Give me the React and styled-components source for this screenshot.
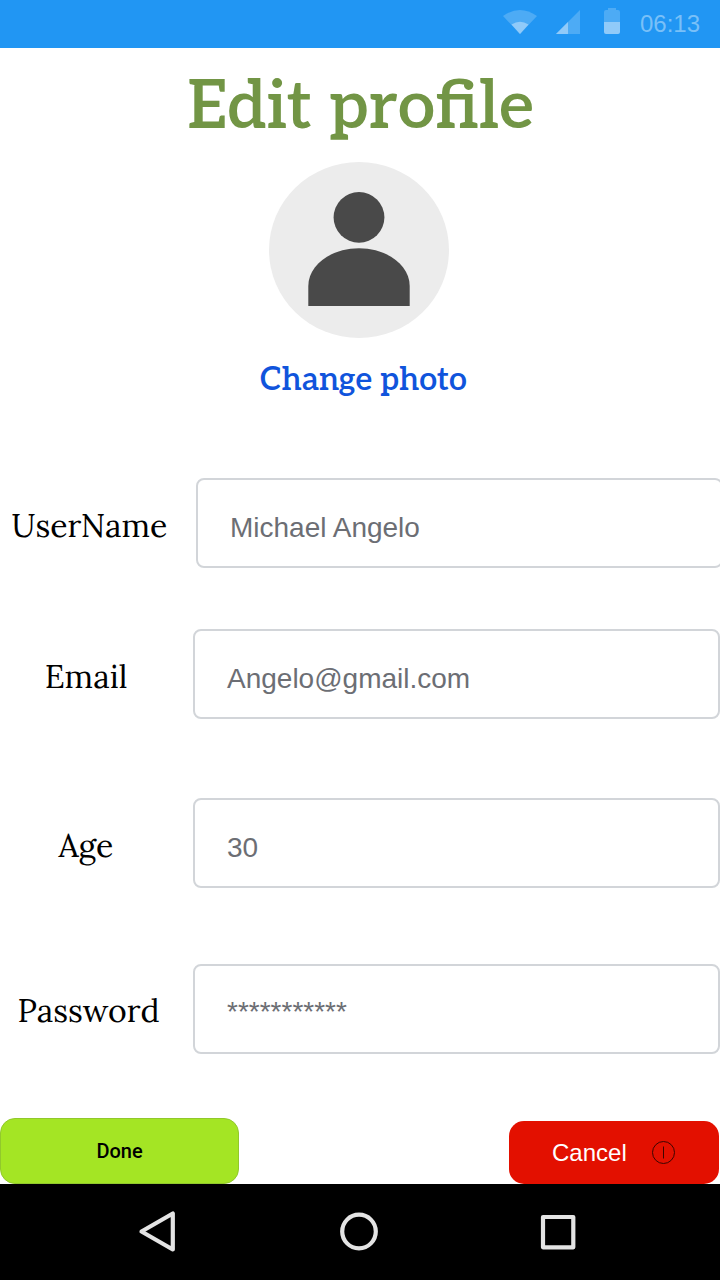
import React from "react";
import styled, { createGlobalStyle } from "styled-components";

const GlobalStyle = createGlobalStyle`
  * { box-sizing: border-box; }
  body { margin: 0; background: #fff; overflow: hidden; }
`;

const Screen = styled.div`
  width: 720px;
  height: 1280px;
  display: flex;
  flex-direction: column;
  overflow: hidden;
  background: #fff;
  font-family: "Liberation Sans", Arial, sans-serif;
`;

const StatusBar = styled.header`
  height: 48px;
  flex: none;
  display: flex;
  align-items: center;
  justify-content: flex-end;
  padding-right: 20px;
  background: #2196f3;
`;

const StatusIcons = styled.svg`
  width: 140px;
  height: 48px;
  display: block;
`;

const Clock = styled.time`
  width: 60px;
  font: 24px/48px "Liberation Sans", Arial, sans-serif;
  white-space: nowrap;
  color: #79c0f8;
`;

const Profile = styled.section`
  height: 430px;
  flex: none;
  display: flex;
  flex-direction: column;
  align-items: center;
`;

const Title = styled.h1`
  margin: 0 0 0 1px;
  height: 114px;
  font: 620 68px/118px "Roboto Slab", Aleo, "DejaVu Serif", serif;
  white-space: nowrap;
  color: #729545;
  transform: scaleX(0.986);
`;

const Avatar = styled.svg`
  width: 180px;
  height: 176px;
  margin-right: 2px;
  flex: none;
`;

const ChangePhoto = styled.a`
  margin: 21px 0 0 7px;
  font: 600 32px/42px "Roboto Slab", Aleo, "DejaVu Serif", serif;
  white-space: nowrap;
  color: #1054dc;
`;

const Field = styled.div`
  display: flex;
  flex: none;
  height: 90px;
  margin-bottom: ${(p) => p.$gap}px;
`;

const Label = styled.label`
  width: ${(p) => p.$width}px;
  padding-right: ${(p) => p.$inset}px;
  flex: none;
  text-align: center;
  font: 32px/${(p) => p.$line}px Lora, "Liberation Serif", serif;
  white-space: nowrap;
  color: #000;
`;

const Value = styled.div`
  width: 527px;
  flex: none;
  border: 2px solid #d2d5d9;
  border-radius: 8px;
  padding-left: 32px;
  font-size: 28px;
  line-height: ${(p) => p.$line}px;
  color: #6c6e74;
`;

const Actions = styled.div`
  height: 66px;
  margin-top: 64px;
  flex: none;
  display: flex;
  align-items: flex-end;
  justify-content: space-between;
  padding-right: 1px;
`;

const DoneButton = styled.button`
  width: 239px;
  height: 66px;
  padding: 0;
  border: 1px solid #91c82c;
  border-radius: 15px;
  background: #a4e524;
  color: #000;
  font: 500 20px/64px Roboto, sans-serif;
`;

const CancelButton = styled.button`
  width: 210px;
  height: 63px;
  display: flex;
  align-items: center;
  gap: 24px;
  padding: 0 0 0 43px;
  border: 0;
  border-radius: 15px;
  background: #e31000;
  color: #fff;
  font: 24px/63px "Liberation Sans", Arial, sans-serif;
`;

const CancelIcon = styled.svg`
  width: 24px;
  height: 24px;
`;

const NavBar = styled.nav`
  height: 96px;
  flex: none;
  background: #000;
`;

const NavIcons = styled.svg`
  display: block;
  width: 720px;
  height: 96px;
`;

const fields = [
  { label: "UserName", value: "Michael Angelo", width: 196, inset: 17, gap: 61, labelLine: 96, valueLine: 95 },
  { label: "Email", value: "Angelo@gmail.com", width: 193, inset: 21, gap: 79, labelLine: 96, valueLine: 95 },
  { label: "Age", value: "30", width: 193, inset: 21, gap: 76, labelLine: 96, valueLine: 95 },
  { label: "Password", value: "***********", width: 193, inset: 16, gap: 0, labelLine: 94, valueLine: 91 },
];

export default function App() {
  return (
    <Screen>
      <GlobalStyle />
      <StatusBar>
        <StatusIcons viewBox="500 0 140 48">
          <path d="M503 16Q520 4 537 16L520 34Z" fill="#4dabf5" />
          <path d="M511.5 24.5Q520 19 528.5 24.5L520 34Z" fill="#90caf9" />
          <path d="M556 34 580 10V34Z" fill="#4dabf5" />
          <path d="M556 34 568 22V34Z" fill="#90caf9" />
          <path d="M608 8h8v2h2q2 0 2 2v10h-16V12q0-2 2-2h2Z" fill="#4dabf5" />
          <path d="M604 22h16v10q0 2-2 2h-12q-2 0-2-2Z" fill="#90caf9" />
        </StatusIcons>
        <Clock>06:13</Clock>
      </StatusBar>
      <Profile>
        <Title>Edit profile</Title>
        <Avatar viewBox="0 0 180 176">
          <ellipse cx="90" cy="88" rx="90" ry="88" fill="#ececec" />
          <circle cx="90" cy="55.4" r="25.4" fill="#494949" />
          <path d="M39.3 144V124C39.3 103 62 86.3 90 86.3S140.7 103 140.7 124V144Z" fill="#494949" />
        </Avatar>
        <ChangePhoto>Change photo</ChangePhoto>
      </Profile>
      {fields.map((f) => (
        <Field key={f.label} $gap={f.gap}>
          <Label $width={f.width} $inset={f.inset} $line={f.labelLine}>{f.label}</Label>
          <Value $line={f.valueLine}>{f.value}</Value>
        </Field>
      ))}
      <Actions>
        <DoneButton>Done</DoneButton>
        <CancelButton>
          Cancel
          <CancelIcon viewBox="0 0 24 24" fill="none" stroke="#3d0500">
            <circle cx="12.5" cy="11.5" r="11" />
            <path d="M12.5 5.5v12" />
          </CancelIcon>
        </CancelButton>
      </Actions>
      <NavBar>
        <NavIcons viewBox="0 0 720 96" fill="none" stroke="#e4e4e4" strokeWidth="4.2" strokeLinejoin="round">
          <path d="M141.5 47.5 172.8 29.5V65.5Z" />
          <circle cx="359" cy="47.5" r="16.8" />
          <rect x="543" y="33" width="30.3" height="30.3" />
        </NavIcons>
      </NavBar>
    </Screen>
  );
}
